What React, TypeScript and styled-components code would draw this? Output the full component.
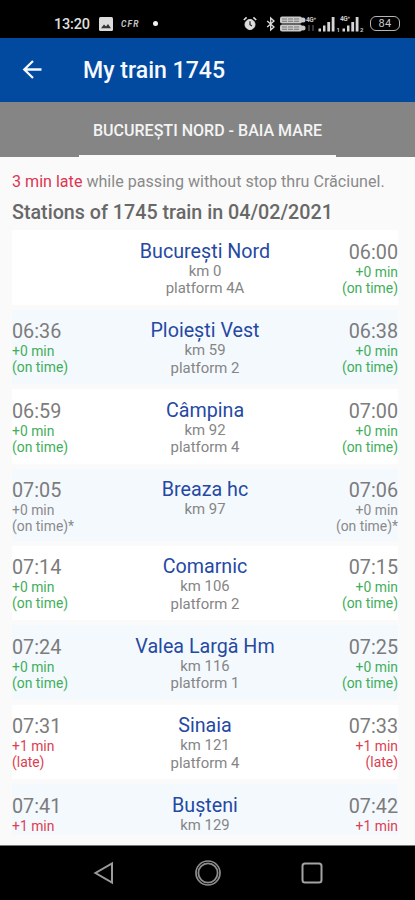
import React from 'react';
import styled, { createGlobalStyle } from 'styled-components';

const GlobalStyle = createGlobalStyle`
  * { box-sizing: border-box; }
  body { margin: 0; background: #fafafa; font-family: Roboto, "Noto Sans", sans-serif; }
`;

type Tone = 'green' | 'red' | 'gray';
const tones: Record<Tone, string> = { green: '#3fae5a', red: '#dc4050', gray: '#8a8a8a' };

const Screen = styled.div`
  width: 415px;
  height: 900px;
  overflow: hidden;
  display: flex;
  flex-direction: column;
  background: #fafafa;
`;

const StatusBar = styled.div`
  height: 38px;
  flex: none;
  padding: 10px 15px 0 54px;
  display: flex;
  justify-content: space-between;
  align-items: flex-start;
  background: #000;
`;

const StatusGroup = styled.div`
  display: flex;
  align-items: center;
  height: 27px;
`;

const Clock = styled.span`
  width: 36px;
  padding-top: 1px;
  font-size: 14.5px;
  font-weight: 500;
  letter-spacing: -0.2px;
  white-space: nowrap;
  color: #dedede;
`;

const IconSlot = styled.span`
  display: flex;
  margin-left: 9px;
`;

const Carrier = styled.span`
  width: 22px;
  margin-left: 8px;
  font-size: 8.5px;
  font-weight: 700;
  font-style: italic;
  letter-spacing: 1.2px;
  color: #c4c4c4;
`;

const Dot = styled.span`
  width: 5px;
  height: 5px;
  margin-left: 10px;
  border-radius: 50%;
  background: #f2f2f2;
`;

const Battery = styled.span`
  width: 30px;
  height: 15px;
  border: 1.5px solid #b5b5b5;
  border-radius: 6px;
  font-size: 11px;
  line-height: 13px;
  letter-spacing: 0.3px;
  text-align: center;
  color: #c8c8c8;
`;

const AppBar = styled.header`
  height: 64px;
  flex: none;
  display: flex;
  align-items: center;
  padding: 0 0 0 22px;
  background: #014a9f;
`;

const Title = styled.h1`
  margin: 2px 0 0 41px;
  font-size: 23.1px;
  font-weight: 500;
  line-height: 28px;
  color: #f6f9ff;
`;

const TabBar = styled.div`
  height: 55px;
  flex: none;
  display: flex;
  justify-content: center;
  background: #858585;
`;

const Tab = styled.div`
  width: 257px;
  border-bottom: 2px solid #fafafa;
  font-size: 16.05px;
  font-weight: 500;
  line-height: 58px;
  text-align: center;
  white-space: nowrap;
  color: #f4f4f4;
`;

const Content = styled.main`
  height: 688px;
  flex: none;
  padding: 14px 17px 0 12px;
  overflow: hidden;
`;

const Notice = styled.p`
  margin: 0;
  font-size: 16.1px;
  line-height: 21px;
  white-space: nowrap;
  color: #8a8a8a;
`;

const Late = styled.span`
  color: #dd3550;
`;

const Heading = styled.h2`
  margin: 7px 0 0;
  font-size: 19.7px;
  font-weight: 500;
  line-height: 28px;
  white-space: nowrap;
  color: #686868;
`;

const StationList = styled.div`
  margin-top: 3px;
  display: flex;
  flex-direction: column;
  gap: 5px;
`;

const Row = styled.div<{ $tinted: boolean; $height: number }>`
  height: ${p => p.$height}px;
  flex: none;
  padding-top: 9px;
  display: grid;
  grid-template-columns: 90px 1fr 90px;
  background: ${p => (p.$tinted ? '#f4f9fe' : '#ffffff')};
`;

const TimeCell = styled.div<{ $end?: boolean }>`
  padding-top: 1.5px;
  text-align: ${p => (p.$end ? 'right' : 'left')};
  white-space: nowrap;
`;

const Time = styled.div`
  font-size: 19.8px;
  line-height: 23px;
  color: #7c7c7c;
`;

const Delay = styled.div<{ $tone: Tone }>`
  font-size: 13.9px;
  line-height: 16.2px;
  color: ${p => tones[p.$tone]};
`;

const StationCell = styled.div`
  padding-top: 0.6px;
  text-align: center;
  white-space: nowrap;
`;

const Name = styled.div`
  font-size: 19.7px;
  line-height: 23px;
  color: #2549a3;
`;

const Detail = styled.div`
  font-size: 14.9px;
  line-height: 17.5px;
  color: #858585;
`;

const NavBar = styled.nav`
  height: 55px;
  flex: none;
  border-top: 1px solid #777;
  background: #000;
  display: flex;
  justify-content: center;
  align-items: center;
  gap: 76px;
`;

interface Stop {
  name: string;
  km: number;
  platform?: string;
  arrive?: string;
  depart: string;
  tone: Tone;
  delay: number;
  note?: string;
}

const stops: Stop[] = [
  { name: 'București Nord', km: 0, platform: '4A', depart: '06:00', tone: 'green', delay: 0, note: '(on time)' },
  { name: 'Ploiești Vest', km: 59, platform: '2', arrive: '06:36', depart: '06:38', tone: 'green', delay: 0, note: '(on time)' },
  { name: 'Câmpina', km: 92, platform: '4', arrive: '06:59', depart: '07:00', tone: 'green', delay: 0, note: '(on time)' },
  { name: 'Breaza hc', km: 97, arrive: '07:05', depart: '07:06', tone: 'gray', delay: 0, note: '(on time)*' },
  { name: 'Comarnic', km: 106, platform: '2', arrive: '07:14', depart: '07:15', tone: 'green', delay: 0, note: '(on time)' },
  { name: 'Valea Largă Hm', km: 116, platform: '1', arrive: '07:24', depart: '07:25', tone: 'green', delay: 0, note: '(on time)' },
  { name: 'Sinaia', km: 121, platform: '4', arrive: '07:31', depart: '07:33', tone: 'red', delay: 1, note: '(late)' },
  { name: 'Bușteni', km: 129, arrive: '07:41', depart: '07:42', tone: 'red', delay: 1 },
];

const rowHeight = (stop: Stop) => (stop.platform ? 74.5 : stop.note ? 72 : 51);

function TimeInfo({ time, stop, end }: { time?: string; stop: Stop; end?: boolean }) {
  return (
    <TimeCell $end={end}>
      {time && (
        <>
          <Time>{time}</Time>
          <Delay $tone={stop.tone}>+{stop.delay} min</Delay>
          {stop.note && <Delay $tone={stop.tone}>{stop.note}</Delay>}
        </>
      )}
    </TimeCell>
  );
}

function PictureIcon() {
  return (
    <svg width="14" height="14" viewBox="0 0 14 14">
      <rect width="14" height="14" rx="1.5" fill="#dcdcdc" />
      <path d="M2 11.3 L5 7.4 L7 9.6 L9 6.9 L12 11.3Z" fill="#333" />
    </svg>
  );
}

function StatusIcons() {
  return (
    <svg width="127" height="18" viewBox="0 0 127 18">
      <g fill="none" stroke="#dedede">
        <circle cx="7" cy="9.5" r="5" fill="#dedede" />
        <path d="M0.8 5 L3.6 2.4 M13.2 5 L10.4 2.4" strokeWidth="1.6" />
        <path d="M7 6.2 V9.7 L9 11" stroke="#222" strokeWidth="1.2" />
        <path d="M24.2 6 L31 12 L27.7 15 V3 L31 6 L24.2 12" strokeWidth="1.3" />
      </g>
      <g fill="#c9c9c9">
        <rect x="37" y="1.5" width="22" height="7" rx="2" />
        <rect x="37" y="9.5" width="22" height="7" rx="2" />
        <circle cx="60" cy="5" r="2.5" />
        <circle cx="60" cy="13" r="2.5" />
      </g>
      <g stroke="#666" strokeWidth="0.8">
        <path d="M39 4 H56 M39 6.3 H56 M39 12 H56 M39 14.3 H56" strokeDasharray="5 1" />
      </g>
      <g fill="#c9c9c9" fontFamily="Roboto, sans-serif" fontWeight="700" fontSize="6.5">
        <text x="63" y="6.5" textLength="10">4G⁺</text>
        <text x="97" y="6" textLength="10">4G⁺</text>
        <text x="93.5" y="16.5" fontSize="6">1</text>
        <text x="117" y="16.5" fontSize="6">2</text>
      </g>
      <path d="M66 10 V16 M70 10 V16" stroke="#444" strokeWidth="1.6" />
      <g fill="#d6d6d6">
        <rect x="75.5" y="13.5" width="2.5" height="3" />
        <rect x="80" y="10.5" width="2.5" height="6" />
        <rect x="84.3" y="7" width="2.8" height="9.5" />
        <rect x="88.7" y="2" width="2.8" height="14.5" />
        <rect x="99.5" y="13.5" width="2.5" height="3" />
        <rect x="104" y="10.5" width="2.5" height="6" />
        <rect x="108.3" y="7" width="2.8" height="9.5" />
        <rect x="112.7" y="2" width="2.8" height="14.5" />
      </g>
    </svg>
  );
}

export default function App() {
  return (
    <Screen>
      <GlobalStyle />
      <StatusBar>
        <StatusGroup>
          <Clock>13:20</Clock>
          <IconSlot><PictureIcon /></IconSlot>
          <Carrier>CFR</Carrier>
          <Dot />
        </StatusGroup>
        <StatusGroup>
          <StatusIcons />
          <Battery>84</Battery>
        </StatusGroup>
      </StatusBar>
      <AppBar>
        <svg width="20" height="20" viewBox="0 0 20 20" fill="none" stroke="#f4f8ff" strokeWidth="2.3">
          <path d="M19.5 9.5 H2.5 M11 1 L2.3 9.5 L11 18" />
        </svg>
        <Title>My train 1745</Title>
      </AppBar>
      <TabBar>
        <Tab>BUCUREȘTI NORD - BAIA MARE</Tab>
      </TabBar>
      <Content>
        <Notice><Late>3 min late</Late> while passing without stop thru Crăciunel.</Notice>
        <Heading>Stations of 1745 train in 04/02/2021</Heading>
        <StationList>
          {stops.map((s, i) => (
            <Row key={s.name} $tinted={i % 2 === 1} $height={rowHeight(s)}>
              <TimeInfo time={s.arrive} stop={s} />
              <StationCell>
                <Name>{s.name}</Name>
                <Detail>km {s.km}</Detail>
                {s.platform && <Detail>platform {s.platform}</Detail>}
              </StationCell>
              <TimeInfo time={s.depart} stop={s} end />
            </Row>
          ))}
        </StationList>
      </Content>
      <NavBar>
        <svg width="28" height="28" viewBox="0 0 28 28" fill="none" stroke="#9b9b9b" strokeWidth="2">
          <path d="M22 4.5 V23.5 L5.5 14Z" />
        </svg>
        <svg width="28" height="28" viewBox="0 0 28 28" fill="none" stroke="#8d8d8d">
          <circle cx="14" cy="14" r="12" strokeWidth="1.7" />
          <circle cx="14" cy="14" r="9.6" strokeWidth="1.8" />
        </svg>
        <svg width="28" height="28" viewBox="0 0 28 28" fill="none" stroke="#a3a3a3" strokeWidth="2">
          <rect x="4.5" y="4.5" width="19" height="19" rx="2.5" />
        </svg>
      </NavBar>
    </Screen>
  );
}
